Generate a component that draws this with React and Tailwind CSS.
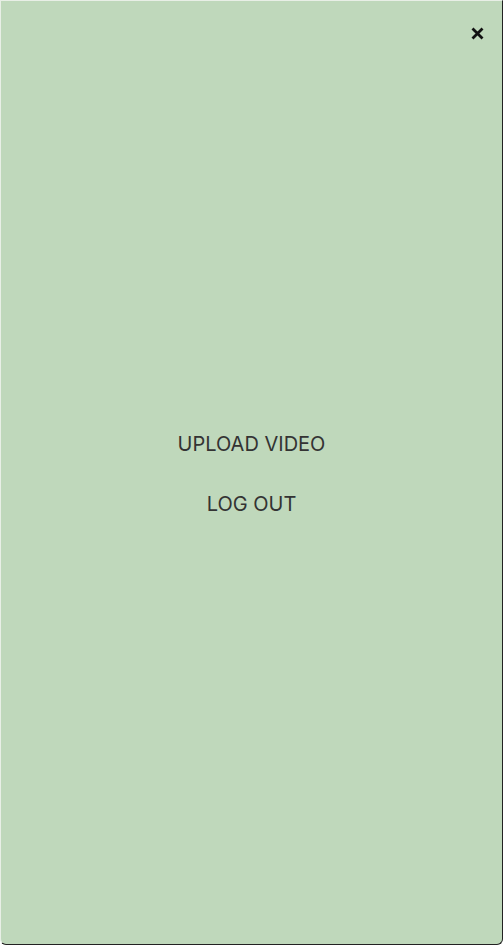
export default function App() {
  return (
    <div className="relative h-screen w-full bg-[#bfd8bb] border-t border-l border-t-[#e8efe6] border-l-[#e8efe6] border-r border-b border-r-[#222] border-b-[#222] rounded-b-md flex flex-col items-center justify-center gap-[34px] pt-[2px] text-[#333] text-[20px] leading-[26px]" style={{ fontFamily: "Inter, 'Liberation Sans', sans-serif" }}>
      <button className="absolute top-[25px] right-[18px] w-[14px] h-[14px] flex items-center justify-center">
        <svg width="13" height="13" viewBox="0 0 13 13">
          <path d="M1.5 1.5 L11.5 11.5 M11.5 1.5 L1.5 11.5" stroke="#111" strokeWidth="2.8" strokeLinecap="butt" />
        </svg>
      </button>
      <div>UPLOAD VIDEO</div>
      <div>LOG OUT</div>
    </div>
  );
}
